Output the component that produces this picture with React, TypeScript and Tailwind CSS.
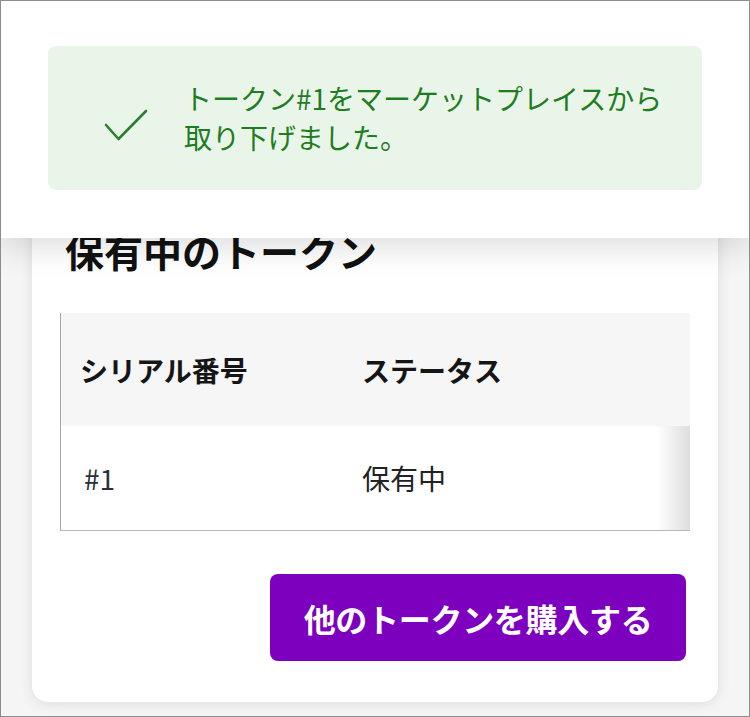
import React from "react";

export default function App() {
  return (
    <div
      className="relative w-[750px] h-[717px] overflow-hidden border border-[#8c8c8c] bg-[#f5f5f5]"
      style={{ fontFamily: '"Noto Sans CJK JP", "Noto Sans", sans-serif' }}
    >
      <div className="px-[31px] pt-[189px]">
        <div className="rounded-[16px] bg-white pt-[36px] pb-[41px] shadow-[0_2px_14px_rgba(0,0,0,0.10)]">
          <h2 className="pl-[33px] text-[39px] leading-[48px] font-bold text-[#111]">保有中のトークン</h2>
          <div className="ml-[28px] mr-[28px] mt-[39px] border-l border-b border-l-[#a8a8a8] border-b-[#b8b8b8]">
            <div className="flex h-[113px] items-center bg-[#f6f6f6] text-[28px] font-bold text-[#151515]">
              <div className="w-[301px] pl-[19px]">シリアル番号</div>
              <div>ステータス</div>
            </div>
            <div className="relative flex h-[104px] items-center bg-white text-[28px] text-[#222]">
              <div className="w-[301px] pl-[23px] text-[#2a2f3a]">#1</div>
              <div>保有中</div>
              <div className="absolute right-0 top-0 h-full w-[34px] bg-gradient-to-r from-transparent to-[rgba(0,0,0,0.13)]" />
            </div>
          </div>
          <div className="mt-[43px] flex justify-end pr-[32px]">
            <button className="h-[87px] w-[416px] rounded-[8px] bg-[#7e00bf] text-[32px] font-bold tracking-[-0.3px] text-white">
              他のトークンを購入する
            </button>
          </div>
        </div>
      </div>

      <div className="absolute left-0 right-0 top-0 h-[237px] bg-white shadow-[0_10px_30px_rgba(0,0,0,0.13)] px-[47px] pt-[45px]">
        <div className="flex h-[144px] items-center rounded-[8px] bg-[#eaf5ea]">
          <svg width="44" height="34" viewBox="0 0 44 34" className="ml-[56px] mt-[16px] shrink-0">
            <polyline
              points="2,16 14.5,30 42,2"
              fill="none"
              stroke="#2e7d32"
              strokeWidth="2.6"
              strokeLinecap="round"
              strokeLinejoin="round"
            />
          </svg>
          <p className="ml-[36px] text-[28px] leading-[39px] text-[#1f7d1f]">
            トークン#1をマーケットプレイスから
            <br />
            取り下げました。
          </p>
        </div>
      </div>
    </div>
  );
}
